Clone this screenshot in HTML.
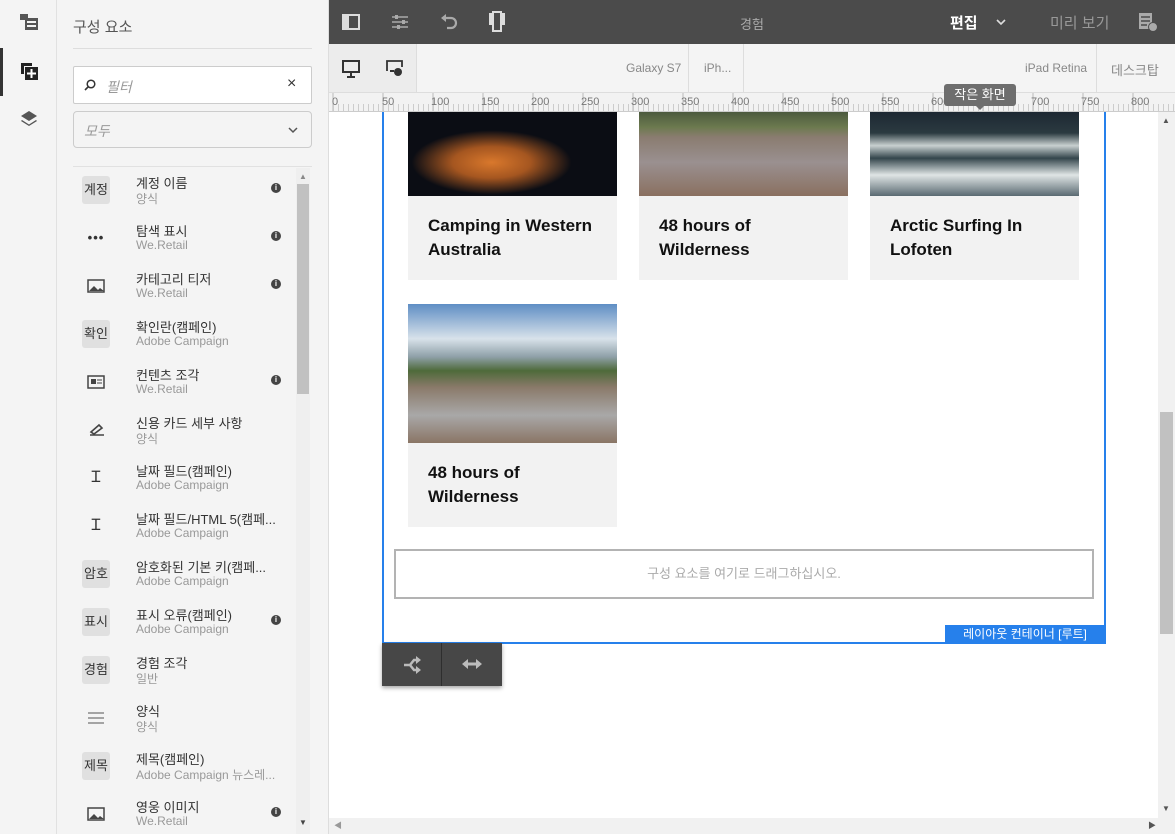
<!DOCTYPE html>
<html><head><meta charset="utf-8">
<style>
*{box-sizing:border-box;margin:0;padding:0}
body{width:1175px;height:834px;overflow:hidden;background:#fff;font-family:"Liberation Sans","Noto Sans CJK KR",sans-serif;position:relative}
.abs{position:absolute}
#rail{left:0;top:0;width:57px;height:834px;background:#f4f4f4;border-right:1px solid #e1e1e1}
#panel{left:57px;top:0;width:272px;height:834px;background:#f4f4f4;border-right:1px solid #ddd}
.item{position:absolute;left:0;width:240px;height:48px}
.ico{position:absolute;left:25px;top:10px;width:28px;height:28px;border-radius:3px;font-size:13px;color:#333;text-align:center;line-height:28px}
.ico.b{background:#e0e0e0}
.t{position:absolute;left:79px;top:7px;font-size:13px;color:#333;white-space:nowrap}
.s{position:absolute;left:79px;top:24px;font-size:12px;color:#999;white-space:nowrap}
.i{position:absolute;left:214px;top:17px;width:10px;height:10px;border-radius:50%;background:#444;color:#fff;font-size:8px;line-height:10px;text-align:center;font-weight:bold}
.card{position:absolute;width:209px;background:#f2f2f2}
.card .txt{padding:18px 20px;font-size:17px;font-weight:bold;line-height:24px;color:#111}
</style></head><body>
<div id="rail" class="abs">
 <svg class="abs" style="left:20px;top:13px" width="18" height="18"><rect x="0" y="1" width="8" height="6" fill="#555"/><rect x="5" y="5" width="13" height="12" fill="#555"/><rect x="7" y="8" width="9" height="2" fill="#f4f4f4"/><rect x="7" y="12" width="9" height="2" fill="#f4f4f4"/></svg>
 <div class="abs" style="left:0;top:48px;width:3px;height:48px;background:#333"></div>
 <svg class="abs" style="left:20px;top:62px" width="18" height="18"><path d="M1 1h11v3H4v8H1z" fill="#222"/><rect x="5" y="5" width="13" height="13" fill="#222"/><path d="M11.5 7v9M7 11.5h9" stroke="#fff" stroke-width="2"/></svg>
 <svg class="abs" style="left:20px;top:110px" width="18" height="18"><path d="M9 1l8 5-8 5-8-5z" fill="#555"/><path d="M2 10l7 4.5 7-4.5 1 1-8 5-8-5z" fill="#555"/></svg>
</div>
<div id="panel" class="abs">
 <div class="abs" style="left:16px;top:16px;font-size:15px;color:#555">구성 요소</div>
 <div class="abs" style="left:16px;top:48px;width:239px;height:1px;background:#ddd"></div>
 <div class="abs" style="left:16px;top:66px;width:239px;height:38px;background:#fff;border:1px solid #ccc;border-radius:2px">
  <svg class="abs" style="left:10px;top:12px" width="12" height="12"><circle cx="7" cy="5" r="3.8" fill="none" stroke="#333" stroke-width="1.5"/><path d="M4.3 7.7L1 11" stroke="#333" stroke-width="1.6"/></svg>
  <div class="abs" style="left:32px;top:10px;font-size:14px;color:#999;font-style:italic">필터</div>
  <div class="abs" style="left:213px;top:8px;font-size:16px;color:#333">×</div>
 </div>
 <div class="abs" style="left:16px;top:111px;width:239px;height:37px;background:#f4f4f4;border:1px solid #ccc;border-radius:4px">
  <div class="abs" style="left:10px;top:9px;font-size:14px;color:#999;font-style:italic">모두</div>
  <svg class="abs" style="left:214px;top:14px" width="10" height="8"><path d="M1 2l4 4 4-4" fill="none" stroke="#555" stroke-width="1.5"/></svg>
 </div>
 <div class="abs" style="left:16px;top:166px;width:239px;height:1px;background:#e1e1e1"></div>
 <div class="abs" style="left:239px;top:168px;width:14px;height:666px;background:#efefef"></div>
 <div class="abs" style="left:240px;top:184px;width:12px;height:210px;background:#c1c1c1"></div>
 <div class="abs" style="left:242px;top:172px;font-size:8px;color:#888">▲</div>
 <div class="abs" style="left:242px;top:818px;font-size:8px;color:#444">▼</div>
 <div class="item" style="top:166px"><div class="ico b">계정</div><div class="t">계정 이름</div><div class="s">양식</div><div class="i">i</div></div>
 <div class="item" style="top:214px"><div class="ico" style="font-weight:bold;letter-spacing:1px">•••</div><div class="t">탐색 표시</div><div class="s">We.Retail</div><div class="i">i</div></div>
 <div class="item" style="top:262px"><div class="ico"><svg width="18" height="14" style="margin-top:7px"><rect x="1" y="1" width="16" height="12" fill="none" stroke="#444" stroke-width="1.5"/><path d="M2 12l5-5 4 4 2-2 4 3z" fill="#444"/></svg></div><div class="t">카테고리 티저</div><div class="s">We.Retail</div><div class="i">i</div></div>
 <div class="item" style="top:310px"><div class="ico b">확인</div><div class="t">확인란(캠페인)</div><div class="s">Adobe Campaign</div></div>
 <div class="item" style="top:358px"><div class="ico"><svg width="18" height="14" style="margin-top:7px"><rect x="1" y="1" width="16" height="12" fill="none" stroke="#444" stroke-width="1.5"/><rect x="4" y="4" width="5" height="5" fill="#444"/><path d="M10 5h5M10 8h5" stroke="#444"/></svg></div><div class="t">컨텐츠 조각</div><div class="s">We.Retail</div><div class="i">i</div></div>
 <div class="item" style="top:406px"><div class="ico"><svg width="18" height="16" style="margin-top:6px"><path d="M3 13h14M4 10l8-7 3 3-8 6z" fill="none" stroke="#444" stroke-width="1.6"/></svg></div><div class="t">신용 카드 세부 사항</div><div class="s">양식</div></div>
 <div class="item" style="top:454px"><div class="ico" style="font-size:16px">Ɪ</div><div class="t">날짜 필드(캠페인)</div><div class="s">Adobe Campaign</div></div>
 <div class="item" style="top:502px"><div class="ico" style="font-size:16px">Ɪ</div><div class="t">날짜 필드/HTML 5(캠페...</div><div class="s">Adobe Campaign</div></div>
 <div class="item" style="top:550px"><div class="ico b">암호</div><div class="t">암호화된 기본 키(캠페...</div><div class="s">Adobe Campaign</div></div>
 <div class="item" style="top:598px"><div class="ico b">표시</div><div class="t">표시 오류(캠페인)</div><div class="s">Adobe Campaign</div><div class="i">i</div></div>
 <div class="item" style="top:646px"><div class="ico b">경험</div><div class="t">경험 조각</div><div class="s">일반</div></div>
 <div class="item" style="top:694px"><div class="ico"><svg width="18" height="14" style="margin-top:7px"><path d="M1 2h16M1 7h16M1 12h16" stroke="#555"/></svg></div><div class="t">양식</div><div class="s">양식</div></div>
 <div class="item" style="top:742px"><div class="ico b">제목</div><div class="t">제목(캠페인)</div><div class="s">Adobe Campaign 뉴스레...</div></div>
 <div class="item" style="top:790px"><div class="ico"><svg width="18" height="14" style="margin-top:7px"><rect x="1" y="1" width="16" height="12" fill="none" stroke="#444" stroke-width="1.5"/><path d="M2 12l5-5 4 4 2-2 4 3z" fill="#444"/></svg></div><div class="t">영웅 이미지</div><div class="s">We.Retail</div><div class="i">i</div></div>
</div>
<!-- top bar -->
<div class="abs" style="left:329px;top:0;width:846px;height:44px;background:#4b4b4b">
 <svg class="abs" style="left:13px;top:14px" width="18" height="16"><rect x="1" y="1" width="16" height="14" fill="none" stroke="#ddd" stroke-width="2"/><rect x="1" y="1" width="6" height="14" fill="#ddd"/></svg>
 <svg class="abs" style="left:62px;top:13px" width="18" height="18"><path d="M1 4h16M1 9h16M1 14h16" stroke="#aaa" stroke-width="1.5"/><rect x="4" y="2" width="3" height="4" fill="#aaa"/><rect x="11" y="7" width="3" height="4" fill="#aaa"/><rect x="6" y="12" width="3" height="4" fill="#aaa"/></svg>
 <svg class="abs" style="left:111px;top:13px" width="18" height="18"><path d="M5 5h6a5 5 0 010 10H7" fill="none" stroke="#aaa" stroke-width="2.2"/><path d="M1 5l5-4v8z" fill="#aaa"/></svg>
 <svg class="abs" style="left:159px;top:11px" width="18" height="22"><rect x="1" y="2" width="16" height="12" fill="#ddd"/><rect x="5" y="1" width="8" height="19" fill="#4b4b4b" stroke="#ddd" stroke-width="2"/></svg>
 <div class="abs" style="left:411px;top:14px;font-size:13px;color:#aaa">경험</div>
 <div class="abs" style="left:621px;top:12px;font-size:15px;color:#fff;font-weight:bold">편집</div>
 <svg class="abs" style="left:667px;top:18px" width="10" height="8"><path d="M1 2l4 4 4-4" fill="none" stroke="#ddd" stroke-width="1.6"/></svg>
 <div class="abs" style="left:721px;top:12px;font-size:15px;color:#999">미리 보기</div>
 <svg class="abs" style="left:809px;top:12px" width="20" height="20"><rect x="1" y="1" width="13" height="16" fill="#aaa"/><path d="M3 5h9M3 9h9M3 13h6" stroke="#4b4b4b" stroke-width="1.5"/><circle cx="15" cy="15" r="4.5" fill="#aaa" stroke="#4b4b4b"/></svg>
</div>
<!-- device bar -->
<div class="abs" style="left:329px;top:44px;width:846px;height:49px;background:#f4f4f4;border-bottom:1px solid #ddd">
 <div class="abs" style="left:0;top:0;width:88px;height:48px;background:#ececec;border-right:1px solid #ddd"></div>
 <svg class="abs" style="left:13px;top:16px" width="18" height="18"><rect x="1" y="1" width="16" height="11" fill="none" stroke="#333" stroke-width="2"/><path d="M9 12v4M5 17h8" stroke="#333" stroke-width="2"/></svg>
 <svg class="abs" style="left:57px;top:16px" width="18" height="18"><path d="M1 11V1h15v6" fill="none" stroke="#333" stroke-width="1.8"/><circle cx="12" cy="12" r="4" fill="#333"/><path d="M4 11h4" stroke="#333" stroke-width="2"/></svg>
 <div class="abs" style="left:359px;top:0;width:1px;height:48px;background:#ddd"></div>
 <div class="abs" style="left:414px;top:0;width:1px;height:48px;background:#ddd"></div>
 <div class="abs" style="left:767px;top:0;width:1px;height:48px;background:#ddd"></div>
 <div class="abs" style="left:297px;top:17px;font-size:12px;color:#888">Galaxy S7</div>
 <div class="abs" style="left:375px;top:17px;font-size:12px;color:#888">iPh...</div>
 <div class="abs" style="left:696px;top:17px;font-size:12px;color:#888">iPad Retina</div>
 <div class="abs" style="left:782px;top:16px;font-size:13px;color:#888">데스크탑</div>
</div>
<!-- ruler -->
<div class="abs" style="left:329px;top:93px;width:846px;height:19px;background:#f2f2f2;border-bottom:1px solid #ccc;overflow:hidden">
 <svg width="846" height="19" class="abs" style="left:0;top:0">
  <g stroke="#bbb">
   <path d="M4 0v19M54 0v19M104 0v19M154 0v19M204 0v19M254 0v19M304 0v19M354 0v19M404 0v19M454 0v19M504 0v19M554 0v19M604 0v19M654 0v19M704 0v19M754 0v19M804 0v19"/>
  </g>
  <path d="M0 15h846" stroke="#ccc" stroke-dasharray="1 4" stroke-width="8" transform="translate(4,0)"/>
  <g font-size="11" fill="#777" font-family="Liberation Sans">
   <text x="3" y="12">0</text><text x="53" y="12">50</text><text x="102" y="12">100</text><text x="152" y="12">150</text><text x="202" y="12">200</text><text x="252" y="12">250</text><text x="302" y="12">300</text><text x="352" y="12">350</text><text x="402" y="12">400</text><text x="452" y="12">450</text><text x="502" y="12">500</text><text x="552" y="12">550</text><text x="602" y="12">600</text><text x="702" y="12">700</text><text x="752" y="12">750</text><text x="802" y="12">800</text>
  </g>
 </svg>
</div>
<div class="abs" style="left:944px;top:84px;width:72px;height:22px;background:#6e6e6e;border-radius:3px;color:#fff;font-size:13px;text-align:center;line-height:22px">작은 화면</div>
<div class="abs" style="left:975px;top:105px;width:0;height:0;border-left:5px solid transparent;border-right:5px solid transparent;border-top:5px solid #6e6e6e"></div>
<!-- canvas -->
<div class="abs" style="left:382px;top:112px;width:724px;height:532px;border:2px solid #2680eb;border-top:none"></div>
<div class="abs" style="left:945px;top:625px;width:160px;height:18px;background:#2680eb;color:#fff;font-size:12px;line-height:18px;text-align:center">레이아웃 컨테이너 [루트]</div>
<div class="card" style="left:408px;top:112px;height:168px"><div style="height:84px;background:radial-gradient(ellipse at 40% 60%,#d9782c 0,#a55620 22%,#0b0d14 45%),#0b0d14"></div><div class="txt">Camping in Western Australia</div></div>
<div class="card" style="left:639px;top:112px;height:168px"><div style="height:84px;background:linear-gradient(180deg,#4c5a3e 0,#6c7a4f 18%,#8a7c70 30%,#9a9090 60%,#8a7060 100%)"></div><div class="txt">48 hours of Wilderness</div></div>
<div class="card" style="left:870px;top:112px;height:168px"><div style="height:84px;background:linear-gradient(180deg,#1d2833 0,#2b3a40 25%,#c8d0d0 40%,#34454c 55%,#dfe5e5 75%,#5a6a72 100%)"></div><div class="txt">Arctic Surfing In Lofoten</div></div>
<div class="card" style="left:408px;top:304px;height:223px"><div style="height:139px;background:linear-gradient(180deg,#5f8ec4 0,#d8e2ea 25%,#8fa0a8 38%,#4e6a3a 48%,#8a7a6a 60%,#a9a8a8 80%,#8a7565 100%)"></div><div class="txt">48 hours of Wilderness</div></div>
<div class="abs" style="left:394px;top:549px;width:700px;height:50px;border:2px solid #b3b3b3;color:#aaa;font-size:13px;text-align:center;line-height:46px">구성 요소를 여기로 드래그하십시오.</div>
<div class="abs" style="left:382px;top:643px;width:120px;height:43px;background:#474747;box-shadow:0 2px 4px rgba(0,0,0,.35)">
 <div class="abs" style="left:59px;top:0;width:1px;height:43px;background:#2e2e2e"></div>
 <svg class="abs" style="left:21px;top:13px" width="18" height="18"><path d="M1 9h6l4-5h3M7 9l4 5h3" fill="none" stroke="#bbb" stroke-width="2.5"/><path d="M13 0l5 4-5 4zM13 10l5 4-5 4z" fill="#bbb"/></svg>
 <svg class="abs" style="left:80px;top:15px" width="20" height="12"><path d="M4 6h12" stroke="#bbb" stroke-width="3"/><path d="M0 6l6-5v10zM20 6l-6-5v10z" fill="#bbb"/></svg>
</div>
<!-- scrollbars -->
<div class="abs" style="left:1158px;top:112px;width:17px;height:706px;background:#f1f1f1"></div>
<div class="abs" style="left:1160px;top:412px;width:13px;height:222px;background:#c1c1c1"></div>
<div class="abs" style="left:1162px;top:116px;font-size:8px;color:#555">▲</div>
<div class="abs" style="left:1162px;top:804px;font-size:8px;color:#555">▼</div>
<div class="abs" style="left:329px;top:818px;width:846px;height:16px;background:#f1f1f1"></div>
<div class="abs" style="left:334px;top:820px;font-size:8px;color:#999">◀</div>
<div class="abs" style="left:1148px;top:820px;font-size:8px;color:#555">▶</div>
</body></html>
